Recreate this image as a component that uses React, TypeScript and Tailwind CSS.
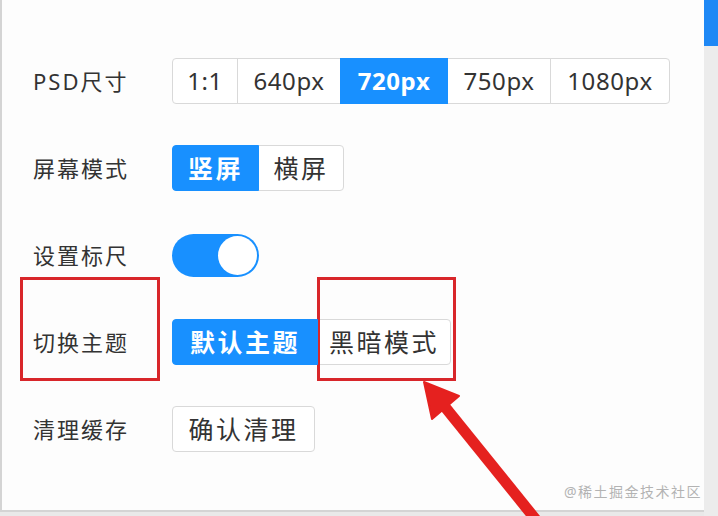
import React, { useState } from 'react';

const FONT = { fontFamily: '"Noto Sans", "Noto Sans CJK SC", sans-serif' };

const latin = 'text-[24px] tracking-[0.6px]';
const cjk = 'text-[25px] tracking-[2.5px]';

interface Seg {
  label: string;
  width: string;
  cjk?: boolean;
}

const SegmentGroup: React.FC<{ items: Seg[]; active: number; onPick?: (i: number) => void }> = ({ items, active, onPick }) => {
  return (
    <div className="flex h-[46px]">
      {items.map((it, i) => {
        const on = i === active;
        const first = i === 0;
        const last = i === items.length - 1;
        return (
          <button
            key={it.label}
            onClick={() => onPick && onPick(i)}
            className={[
              'h-full flex items-center justify-center border leading-none',
              it.width,
              it.cjk ? cjk : latin,
              first ? 'rounded-l-[4px]' : '-ml-px',
              last ? 'rounded-r-[4px]' : '',
              on
                ? 'relative z-10 bg-[#1890ff] border-[#1890ff] text-white font-bold'
                : 'bg-white border-[#d9d9d9] text-[#333]',
            ].join(' ')}
          >
            {it.label}
          </button>
        );
      })}
    </div>
  );
};

const Row: React.FC<{ label: string; children: React.ReactNode }> = ({ label, children }) => (
  <div className="flex items-center h-[46px]">
    <div className="w-[139px] text-[22px] tracking-[2px] text-[#333] leading-none">{label}</div>
    {children}
  </div>
);

export default function App() {
  const [size, setSize] = useState(2);
  const [mode, setMode] = useState(0);
  const [ruler, setRuler] = useState(true);
  const [theme, setTheme] = useState(0);

  return (
    <div className="relative w-[718px] h-[516px] overflow-hidden bg-[#e9e9e9] flex" style={FONT}>
      <div className="w-[704px] h-[512px] bg-[#fdfdfd] border-l-2 border-b-2 border-[#d4d4d4] pt-[58px] pl-[31px] flex flex-col gap-[41px]">
        <Row label="PSD尺寸">
          <SegmentGroup
            active={size}
            onPick={setSize}
            items={[
              { label: '1:1', width: 'w-[66px]' },
              { label: '640px', width: 'w-[104px]' },
              { label: '720px', width: 'w-[108px]' },
              { label: '750px', width: 'w-[104px]' },
              { label: '1080px', width: 'w-[120px]' },
            ]}
          />
        </Row>
        <Row label="屏幕模式">
          <SegmentGroup
            active={mode}
            onPick={setMode}
            items={[
              { label: '竖屏', width: 'w-[87px]', cjk: true },
              { label: '横屏', width: 'w-[86px]', cjk: true },
            ]}
          />
        </Row>
        <Row label="设置标尺">
          <button
            onClick={() => setRuler(!ruler)}
            className={`w-[87px] h-[43px] rounded-full p-[2px] flex ${ruler ? 'bg-[#1890ff] justify-end' : 'bg-[#bfbfbf] justify-start'}`}
          >
            <span className="block w-[39px] h-[39px] rounded-full bg-white" />
          </button>
        </Row>
        <Row label="切换主题">
          <SegmentGroup
            active={theme}
            onPick={setTheme}
            items={[
              { label: '默认主题', width: 'w-[146px]', cjk: true },
              { label: '黑暗模式', width: 'w-[134px]', cjk: true },
            ]}
          />
        </Row>
        <Row label="清理缓存">
          <button className={`w-[143px] h-[46px] flex items-center justify-center bg-white border border-[#d9d9d9] rounded-[4px] text-[#333] leading-none ${cjk}`}>
            确认清理
          </button>
        </Row>
      </div>

      {/* scrollbar */}
      <div className="w-[14px] h-full bg-[#ececec] flex flex-col">
        <div className="h-[46px] bg-[#1e88f5]" />
      </div>

      {/* annotations */}
      <div className="absolute left-[20px] top-[277px] w-[140px] h-[104px] border-[3px] border-[#d8262a] pointer-events-none" />
      <div className="absolute left-[317px] top-[277px] w-[139px] h-[104px] border-[3px] border-[#d8262a] pointer-events-none" />
      <svg className="absolute inset-0 pointer-events-none" width="718" height="516" viewBox="0 0 718 516">
        <line x1="445" y1="407" x2="541" y2="526" stroke="#e5211f" strokeWidth="11" />
        <polygon points="424,382 432,419 459,396" fill="#e5211f" stroke="#e5211f" strokeWidth="2" strokeLinejoin="round" />
      </svg>
      <div className="absolute right-[16px] top-[481px] text-[14px] tracking-[1.5px] text-[#b3b3b3] leading-[22px] pointer-events-none">
        @稀土掘金技术社区
      </div>
    </div>
  );
}
